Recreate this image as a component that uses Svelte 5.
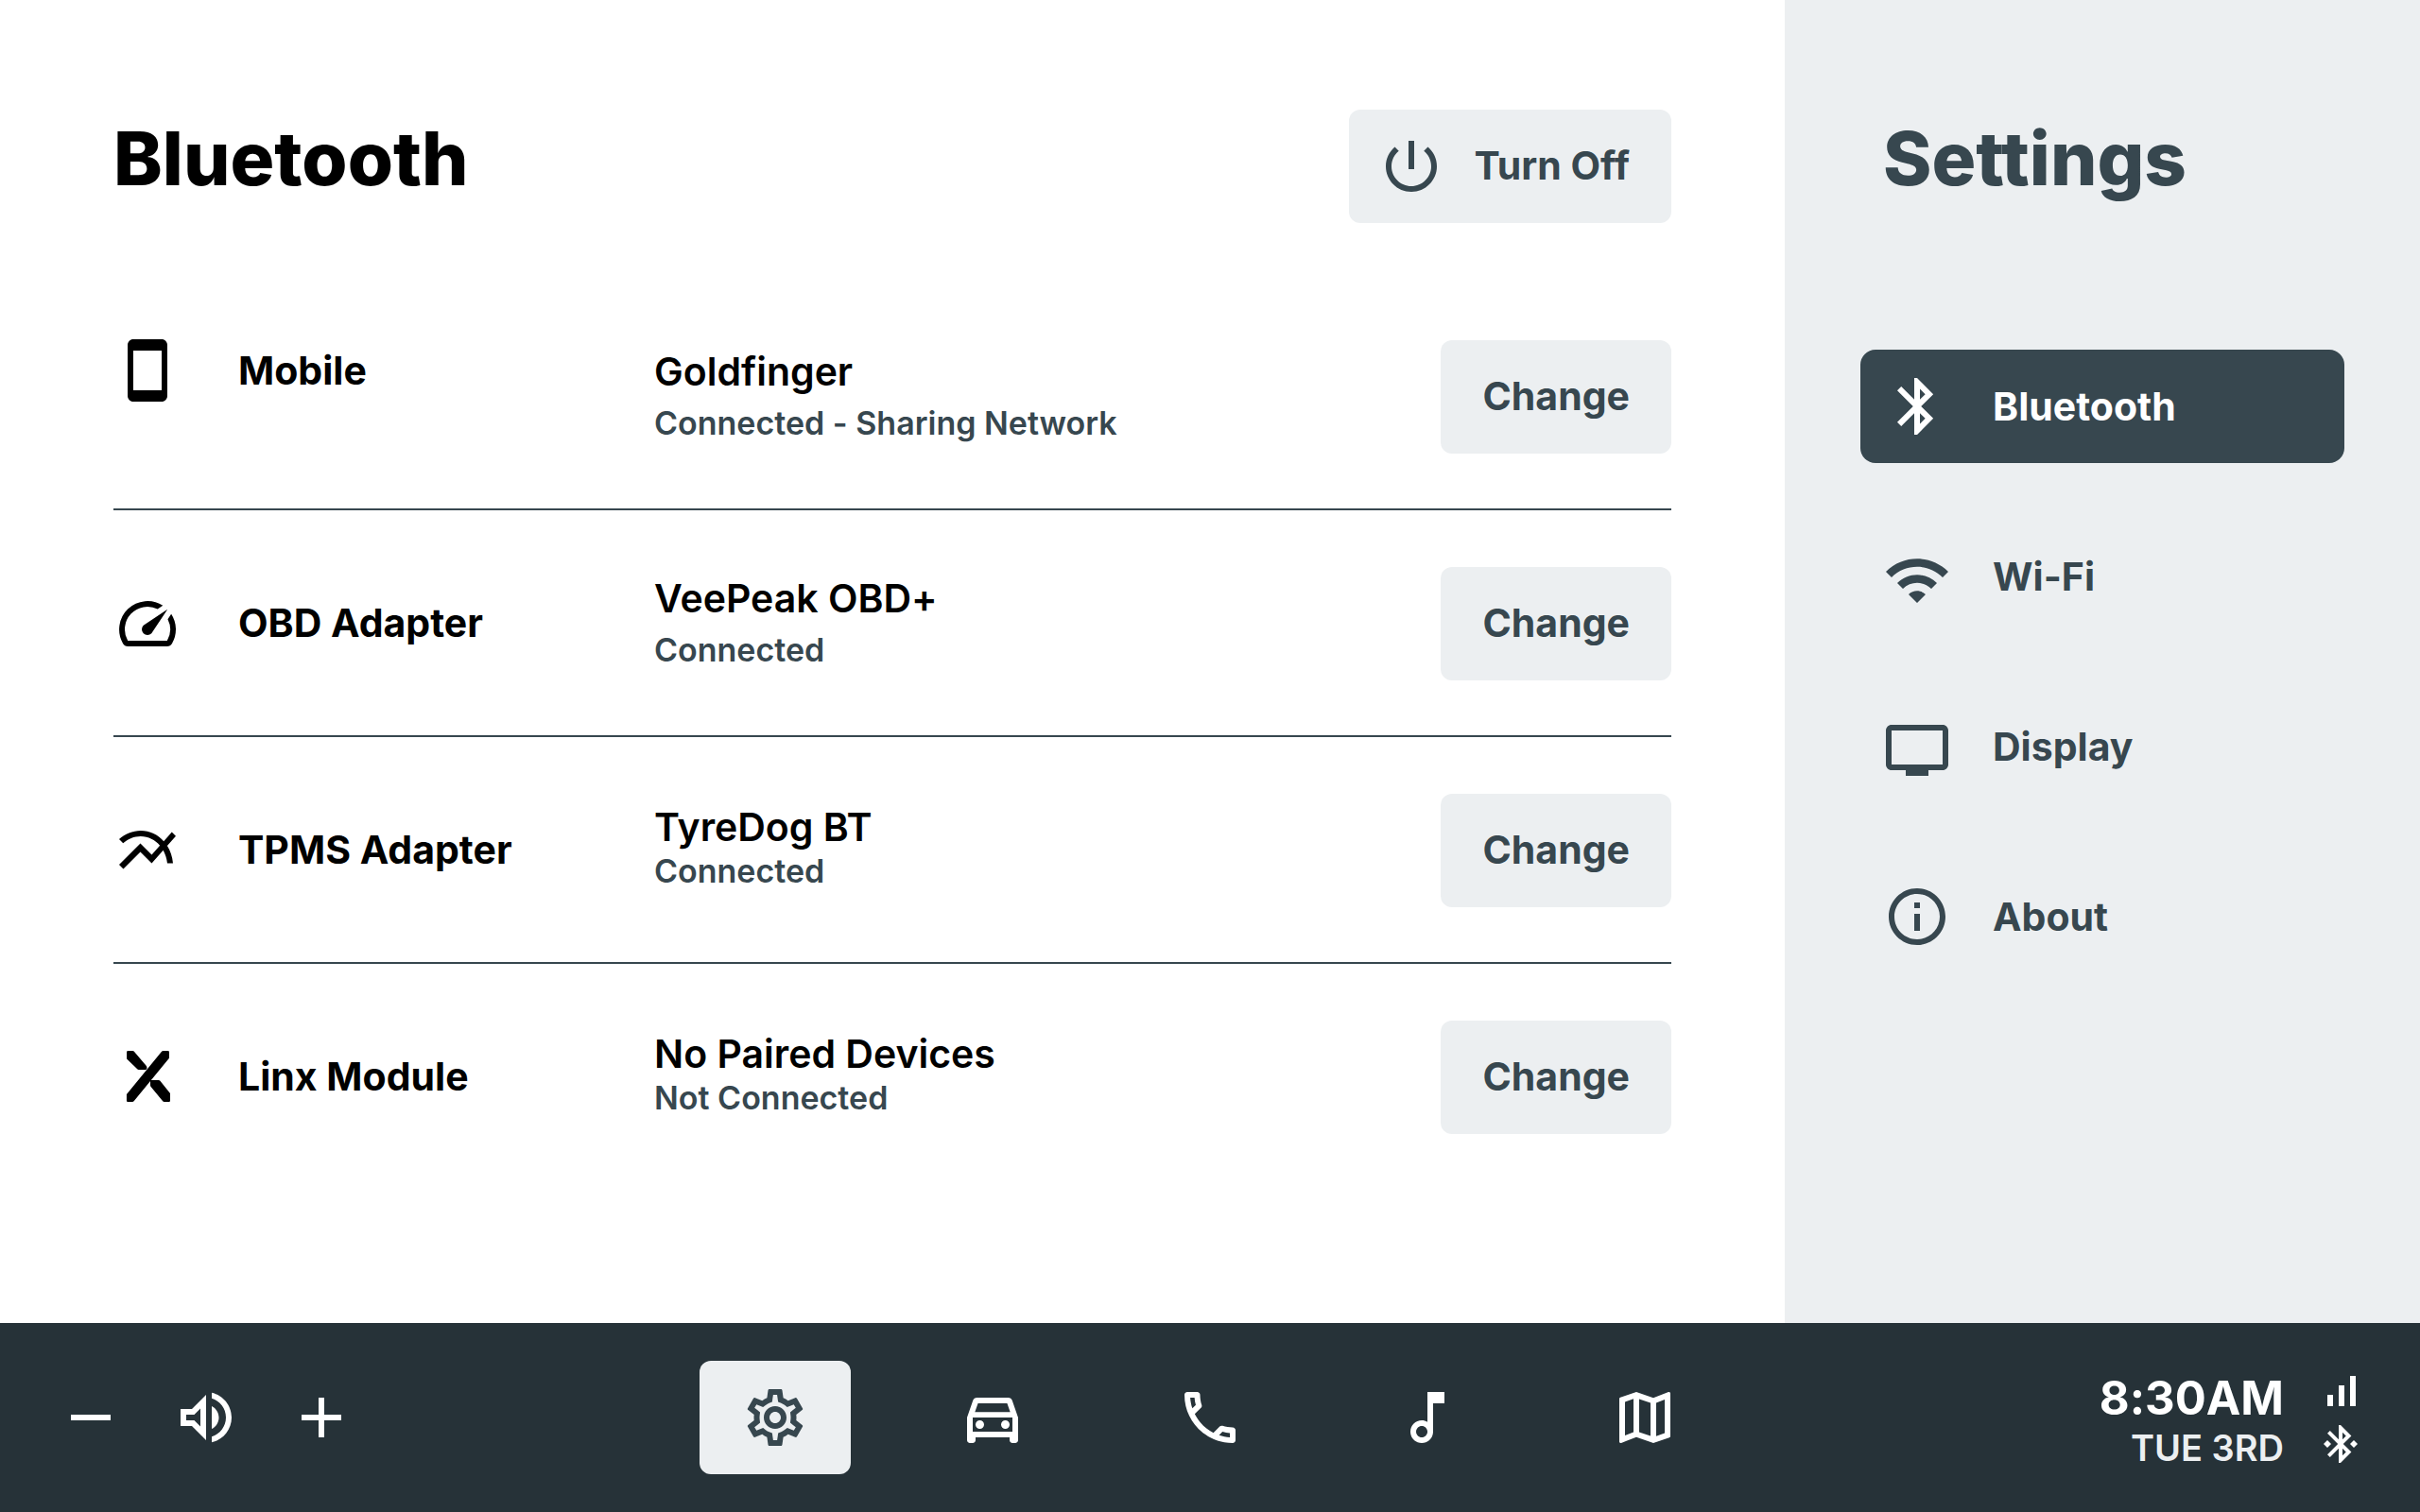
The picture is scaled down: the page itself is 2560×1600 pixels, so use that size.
<script>
  const icons = {
    power: 'M13 3h-2v10h2V3zm4.83 2.17l-1.42 1.42C17.99 7.86 19 9.81 19 12c0 3.87-3.13 7-7 7s-7-3.13-7-7c0-2.19 1.01-4.14 2.58-5.42L6.17 5.17C4.23 6.82 3 9.26 3 12c0 4.97 4.03 9 9 9s9-4.03 9-9c0-2.74-1.23-5.18-3.17-6.83z',
    phone: 'M17 1.01L7 1c-1.1 0-1.99.9-1.99 2v18c0 1.1.89 2 1.99 2h10c1.1 0 2-.9 2-2V3c0-1.1-.9-1.99-2-1.99zM17 19H7V5h10v14z',
    speed: 'M20.38 8.57l-1.23 1.85a8 8 0 0 1-.22 7.58H5.07A8 8 0 0 1 15.58 6.85l1.85-1.23A10 10 0 0 0 3.35 19a2 2 0 0 0 1.72 1h13.85a2 2 0 0 0 1.74-1 10 10 0 0 0-.27-10.44zm-9.79 6.84a2 2 0 0 0 2.83 0l5.66-8.49-8.49 5.66a2 2 0 0 0 0 2.83z',
    chart: 'M22 6.92l-1.41-1.41-2.85 3.21C15.68 6.4 12.83 5 9.61 5 6.72 5 4.07 6.16 2 8l1.42 1.42C5.12 7.93 7.27 7 9.61 7c2.74 0 5.09 1.26 6.77 3.24l-2.88 3.24-4-4L2 16.99l1.5 1.5 6-6.01 4 4 4.05-4.55c.75 1.35 1.25 2.9 1.44 4.55H21c-.22-2.3-.95-4.39-2.04-6.14L22 6.92z',
    linx: 'M17.5 2.67h1.75q.4 0 .4.4v2.2L7.2 20.4q-.22.27-.5.27H5.05q-.4 0-.4-.4V18L17 2.9q.2-.23.5-.23zM5.1 2.67h1.7q.3 0 .5.25l4.25 5q.25.3.25.6v.35q0 .45-.45.45H8.9q-.3 0-.5-.22L4.7 5.5V3.07q0-.4.4-.4zM13.4 13h2.5q.3 0 .5.2l3.6 4.5v2.57q0 .4-.4.4h-1.7q-.3 0-.5-.25l-4.2-5.1q-.2-.25-.2-.6v-1.3q0-.42.4-.42z',
    bluetooth: 'M17.71 7.71L12 2h-1v7.59L6.41 5 5 6.41 10.59 12 5 17.59 6.41 19 11 14.41V22h1l5.71-5.71-4.3-4.29 4.3-4.29zM13 5.83l1.88 1.88L13 9.59V5.83zm1.88 10.46L13 18.17v-3.76l1.88 1.88z',
    wifi: 'M1 9l2 2c4.97-4.97 13.03-4.97 18 0l2-2C16.93 2.93 7.08 2.93 1 9zm8 8l3 3 3-3c-1.65-1.66-4.34-1.66-6 0zm-4-4l2 2c2.76-2.76 7.24-2.76 10 0l2-2C15.14 9.14 8.87 9.14 5 13z',
    display: 'M21 3H3c-1.1 0-2 .9-2 2v12c0 1.1.9 2 2 2h5v2h8v-2h5c1.1 0 2-.9 2-2V5c0-1.1-.9-2-2-2zm0 14H3V5h18v12z',
    info: 'M11 7h2v2h-2V7zm0 4h2v6h-2v-6zm1-9C6.48 2 2 6.48 2 12s4.48 10 10 10 10-4.48 10-10S17.52 2 12 2zm0 18c-4.41 0-8-3.59-8-8s3.59-8 8-8 8 3.59 8 8-3.59 8-8 8z',
    minus: 'M5 11h14v2H5z',
    plus: 'M19 13h-6v6h-2v-6H5v-2h6V5h2v6h6v2z',
    volume: 'M3 9v6h4l5 5V4L7 9H3zm7-.17v6.34L7.83 13H5v-2h2.83L10 8.83zM16.5 12c0-1.77-1.02-3.29-2.5-4.03v8.05c1.48-.73 2.5-2.25 2.5-4.02zM14 3.23v2.06c2.89.86 5 3.54 5 6.71s-2.11 5.85-5 6.71v2.06c4.01-.91 7-4.49 7-8.77s-2.99-7.86-7-8.77z',
    settings: 'M19.43 12.98c.04-.32.07-.64.07-.98s-.03-.66-.07-.98l2.11-1.65c.19-.15.24-.42.12-.64l-2-3.46c-.09-.16-.26-.25-.44-.25-.06 0-.12.01-.17.03l-2.49 1c-.52-.4-1.08-.73-1.69-.98l-.38-2.65C14.46 2.18 14.25 2 14 2h-4c-.25 0-.46.18-.49.42l-.38 2.65c-.61.25-1.17.59-1.69.98l-2.49-1c-.06-.02-.12-.03-.18-.03-.17 0-.34.09-.43.25l-2 3.46c-.13.22-.07.49.12.64l2.11 1.65c-.04.32-.07.65-.07.98s.03.66.07.98l-2.11 1.65c-.19.15-.24.42-.12.64l2 3.46c.09.16.26.25.44.25.06 0 .12-.01.17-.03l2.49-1c.52.4 1.08.73 1.69.98l.38 2.65c.03.24.24.42.49.42h4c.25 0 .46-.18.49-.42l.38-2.65c.61-.25 1.17-.59 1.69-.98l2.49 1c.06.02.12.03.18.03.17 0 .34-.09.43-.25l2-3.46c.12-.22.07-.49-.12-.64l-2.11-1.65zm-1.98-1.71c.04.31.05.52.05.73 0 .21-.02.43-.05.73l-.14 1.13.89.7 1.08.84-.7 1.21-1.27-.51-1.04-.42-.9.68c-.43.32-.84.56-1.25.73l-1.06.43-.16 1.13-.2 1.35h-1.4l-.19-1.35-.16-1.13-1.06-.43c-.43-.18-.83-.41-1.23-.71l-.91-.7-1.06.43-1.27.51-.7-1.21 1.08-.84.89-.7-.14-1.13c-.03-.31-.05-.54-.05-.74s.02-.43.05-.73l.14-1.13-.89-.7-1.08-.84.7-1.21 1.27.51 1.04.42.9-.68c.43-.32.84-.56 1.25-.73l1.06-.43.16-1.13.2-1.35h1.39l.19 1.35.16 1.13 1.06.43c.43.18.83.41 1.23.71l.91.7 1.06-.43 1.27-.51.7 1.21-1.07.85-.89.7.14 1.13zM12 8c-2.21 0-4 1.79-4 4s1.79 4 4 4 4-1.79 4-4-1.79-4-4-4zm0 6c-1.1 0-2-.9-2-2s.9-2 2-2 2 .9 2 2-.9 2-2 2z',
    car: 'M18.92 6.01C18.72 5.42 18.16 5 17.5 5h-11c-.66 0-1.21.42-1.42 1.01L3 12v8c0 .55.45 1 1 1h1c.55 0 1-.45 1-1v-1h12v1c0 .55.45 1 1 1h1c.55 0 1-.45 1-1v-8l-2.08-5.99zM6.85 7h10.29l1.08 3.11H5.77L6.85 7zM19 17H5v-5h14v5zM7.5 13a1.5 1.5 0 1 0 0 3 1.5 1.5 0 0 0 0-3zm9 0a1.5 1.5 0 1 0 0 3 1.5 1.5 0 0 0 0-3z',
    call: 'M6.54 5c.06.89.21 1.76.45 2.59l-1.2 1.2c-.41-1.2-.67-2.47-.76-3.79h1.51m9.86 12.02c.85.24 1.72.39 2.6.45v1.49c-1.32-.09-2.59-.35-3.8-.75l1.2-1.19M7.5 3H4c-.55 0-1 .45-1 1 0 9.39 7.61 17 17 17 .55 0 1-.45 1-1v-3.49c0-.55-.45-1-1-1-1.24 0-2.45-.2-3.57-.57-.1-.04-.21-.05-.31-.05-.26 0-.51.1-.71.29l-2.2 2.2c-2.83-1.45-5.15-3.76-6.59-6.59l2.2-2.2c.28-.28.36-.67.25-1.02C8.7 6.45 8.5 5.25 8.5 4c0-.55-.45-1-1-1z',
    music: 'M12 3l.01 10.55c-.59-.34-1.27-.55-2-.55C7.79 13 6 14.79 6 17s1.79 4 4.01 4S14 19.21 14 17V7h4V3h-6zm-1.99 16c-1.1 0-2-.9-2-2s.9-2 2-2 2 .9 2 2-.9 2-2 2z',
    map: 'M20.5 3l-.16.03L15 5.1 9 3 3.36 4.9c-.21.07-.36.25-.36.48V20.5c0 .28.22.5.5.5l.16-.03L9 18.9l6 2.1 5.64-1.9c.21-.07.36-.25.36-.48V3.5c0-.28-.22-.5-.5-.5zM10 5.47l4 1.4v11.66l-4-1.4V5.47zm-5 .99l3-1.01v11.7l-3 1.16V6.46zm14 11.08l-3 1.01V6.86l3-1.16v11.84z',
    signal: 'M17 4h3v16h-3zM5 14h3v6H5zM11 9h3v11h-3z',
    paired: 'M7 12l-2-2-2 2 2 2 2-2zm10.71-4.29L12 2h-1v7.59L6.41 5 5 6.41 10.59 12 5 17.59 6.41 19 11 14.41V22h1l5.71-5.71-4.3-4.29 4.3-4.29zM13 5.83l1.88 1.88L13 9.59V5.83zm1.88 10.46L13 18.17v-3.76l1.88 1.88zM19 10l-2 2 2 2 2-2-2-2z'
  };

  const devices = [
    { icon: 'phone', label: 'Mobile', name: 'Goldfinger', status: 'Connected - Sharing Network', top: true },
    { icon: 'speed', label: 'OBD Adapter', name: 'VeePeak OBD+', status: 'Connected' },
    { icon: 'chart', label: 'TPMS Adapter', name: 'TyreDog BT', status: 'Connected', tight: true },
    { icon: 'linx', label: 'Linx Module', name: 'No Paired Devices', status: 'Not Connected', tight: true }
  ];

  const sections = [
    { icon: 'bluetooth', label: 'Bluetooth' },
    { icon: 'wifi', label: 'Wi-Fi', low: true },
    { icon: 'display', label: 'Display', low: true },
    { icon: 'info', label: 'About' }
  ];

  const apps = [
    { icon: 'settings', label: 'Settings' },
    { icon: 'car', label: 'Car' },
    { icon: 'call', label: 'Phone' },
    { icon: 'music', label: 'Music' },
    { icon: 'map', label: 'Map' }
  ];

  let section = $state('Bluetooth');
  let app = $state('Settings');
</script>

{#snippet icon(name)}
  <svg class="icon" viewBox="0 0 24 24" aria-hidden="true"><path d={icons[name]} /></svg>
{/snippet}

<div class="screen">
  <div class="body">
    <main>
      <header>
        <h1>Bluetooth</h1>
        <button class="action power">{@render icon('power')}<span>Turn Off</span></button>
      </header>
      <ul class="devices">
        {#each devices as d}
          <li>
            <div class="kind" class:top={d.top}>{@render icon(d.icon)}<h2>{d.label}</h2></div>
            <div class="details" class:tight={d.tight}>
              <p class="name">{d.name}</p>
              <p class="status">{d.status}</p>
            </div>
            <button class="action" aria-label={`Change ${d.label}`}><span>Change</span></button>
          </li>
        {/each}
      </ul>
    </main>

    <aside>
      <h1>Settings</h1>
      <nav aria-label="Settings">
        {#each sections as s}
          <button class="section" class:active={section === s.label} class:low={s.low} onclick={() => (section = s.label)}>
            {@render icon(s.icon)}{s.label}
          </button>
        {/each}
      </nav>
    </aside>
  </div>

  <footer>
    <div class="volume">
      <button aria-label="Volume down">{@render icon('minus')}</button>
      <button aria-label="Mute">{@render icon('volume')}</button>
      <button aria-label="Volume up">{@render icon('plus')}</button>
    </div>
    <nav class="apps" aria-label="Apps">
      {#each apps as a}
        <button class:active={app === a.label} aria-label={a.label} onclick={() => (app = a.label)}>{@render icon(a.icon)}</button>
      {/each}
    </nav>
    <div class="state">
      <div class="clock">
        <div class="time">8:30AM</div>
        <div class="date">TUE 3RD</div>
      </div>
      <div class="signals">{@render icon('signal')}{@render icon('paired')}</div>
    </div>
  </footer>
</div>

<style>
  :global(body) {
    margin: 0;
  }

  .screen {
    --pale: #eceff1;
    --slate: #37474f;
    --ink: #263238;
    min-height: 100vh;
    display: grid;
    grid-template-rows: 1fr auto;
    background: #fff;
    color: #000;
    font-family: Inter, "Liberation Sans", sans-serif;
    font-size: 41px;
    font-weight: 600;
    font-variant-ligatures: none;
  }

  h1, h2, p, ul {
    margin: 0;
    padding: 0;
  }

  h1 {
    font-size: 78px;
    font-weight: 800;
    line-height: 104px;
  }

  h2 {
    padding-bottom: 2px;
    font-size: 41px;
    font-weight: 700;
  }

  button {
    border: 0;
    margin: 0;
    padding: 0;
    background: none;
    color: inherit;
    font: inherit;
    font-variant-ligatures: none;
    cursor: pointer;
  }

  .icon {
    display: block;
    flex: none;
    width: 72px;
    height: 72px;
    fill: currentColor;
  }

  .body {
    display: grid;
    grid-template-columns: 1fr 672px;
  }

  main {
    padding: 116px 120px 80px;
  }

  header {
    display: flex;
    justify-content: space-between;
    align-items: flex-start;
    margin-bottom: 64px;
  }

  .action {
    height: 120px;
    padding: 0 44px;
    border-radius: 12px;
    background: var(--pale);
    color: var(--slate);
    font-weight: 700;
  }

  .action span {
    display: block;
    padding-bottom: 2px;
  }

  .power {
    display: flex;
    align-items: center;
    gap: 30px;
    padding-left: 30px;
  }

  .devices {
    list-style: none;
  }

  .devices li {
    display: grid;
    grid-template-columns: 572px 1fr auto;
    align-items: center;
    box-sizing: border-box;
    height: 240px;
    border-bottom: 2px solid var(--slate);
    padding-top: 2px;
  }

  .devices li:last-child {
    border-bottom-color: transparent;
  }

  .kind {
    display: flex;
    align-items: center;
    gap: 60px;
  }

  .kind.top {
    align-self: start;
    height: 64px;
    margin-top: 58px;
  }

  .kind.top h2 {
    padding-bottom: 0;
  }

  .name {
    line-height: 56px;
  }

  .status {
    color: var(--slate);
    font-size: 34px;
    line-height: 54px;
  }

  .tight {
    padding-bottom: 6px;
  }

  .tight .name {
    line-height: 50px;
  }

  .tight .status {
    line-height: 44px;
  }

  aside {
    padding: 116px 80px 80px;
    background: var(--pale);
    color: var(--slate);
  }

  aside h1 {
    padding-left: 24px;
  }

  aside nav {
    display: grid;
    gap: 60px;
    margin-top: 150px;
  }

  .section {
    display: flex;
    align-items: center;
    gap: 44px;
    height: 120px;
    padding: 0 24px;
    border-radius: 16px;
    font-weight: 700;
  }

  .section.active {
    background: var(--slate);
    color: #fff;
  }

  .low .icon {
    margin-top: 8px;
  }

  footer {
    display: grid;
    grid-template-columns: 1fr auto 1fr;
    align-items: center;
    padding: 40px 60px;
    background: var(--ink);
    color: #fff;
  }

  .volume {
    display: flex;
    gap: 50px;
  }

  .apps {
    display: flex;
    gap: 70px;
  }

  .apps button {
    display: grid;
    place-items: center;
    width: 160px;
    height: 120px;
    border-radius: 12px;
  }

  .apps .active {
    background: var(--pale);
    color: var(--slate);
  }

  .state {
    display: flex;
    justify-content: flex-end;
    align-items: center;
    gap: 36px;
  }

  .clock {
    padding-top: 8px;
    text-align: right;
  }

  .time {
    font-size: 49px;
    font-weight: 700;
    line-height: 56px;
  }

  .date {
    color: var(--pale);
    font-size: 38px;
    line-height: 48px;
  }

  .signals {
    display: grid;
    gap: 8px;
  }

  .signals .icon {
    width: 48px;
    height: 48px;
  }
</style>
